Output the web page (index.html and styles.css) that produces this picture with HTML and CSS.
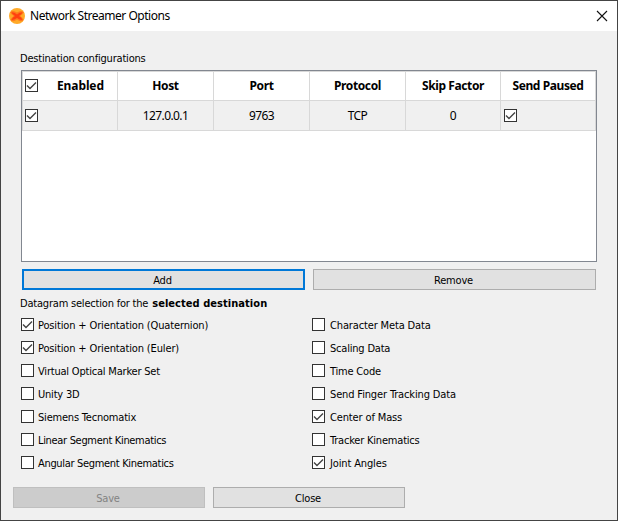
FILE: index.html
```html
<!DOCTYPE html>
<html lang="en">
<head>
<meta charset="utf-8">
<title>Network Streamer Options</title>
<link rel="stylesheet" href="styles.css">
</head>
<body>
<svg class="defs" width="0" height="0"><symbol id="tick" viewBox="0 0 11 11"><path d="M1 5.4 4 8.4 10 2.4" fill="none" stroke="#444" stroke-width="1.4"/></symbol></svg>
<div class="window">
  <header class="titlebar">
    <svg class="logo" viewBox="0 0 16 16"><circle cx="8" cy="8" r="8" fill="#ffaa28"/><path d="M1.2 4.2Q4 1.8 8 4.6 12 1.8 14.8 4.2 13.6 6.8 11.2 8 13.6 9.4 14.6 12 12 14.6 8 11.6 4 14.6 1.4 12 2.4 9.4 4.8 8 2.4 6.8 1.2 4.2Z" fill="#ff7a1c"/><path d="M2.4 4.3Q5.4 4.2 8 6.4 10.6 4.2 13.6 4.3 12.4 6.8 10 8.1 12.6 9.6 13.6 12 10.6 11.8 8 10 5.4 11.8 2.4 12 3.4 9.6 6 8.1 3.6 6.8 2.4 4.3Z" fill="#ff4010"/></svg>
    <h1>Network Streamer Options</h1>
    <svg class="close" viewBox="0 0 12 12"><path d="M1 1 11 11M11 1 1 11" stroke="#111" stroke-width="1.1"/></svg>
  </header>
  <main>
    <p class="caption">Destination configurations</p>
    <div class="table">
      <div class="row head">
        <div class="cell first"><i class="box"><svg><use href="#tick"/></svg></i><span>Enabled</span></div>
        <div class="cell">Host</div><div class="cell">Port</div><div class="cell">Protocol</div><div class="cell">Skip Factor</div><div class="cell">Send Paused</div>
      </div>
      <div class="row data">
        <div class="cell first"><i class="box"><svg><use href="#tick"/></svg></i></div>
        <div class="cell">127.0.0.1</div><div class="cell">9763</div><div class="cell">TCP</div><div class="cell">0</div>
        <div class="cell check"><i class="box"><svg><use href="#tick"/></svg></i></div>
      </div>
    </div>
    <div class="actions"><button class="focus">Add</button><button>Remove</button></div>
    <p class="caption second">Datagram selection for the <b>selected destination</b></p>
    <div class="options">
      <div class="column">
        <label class="wide"><i class="box"><svg><use href="#tick"/></svg></i><span>Position + Orientation (Quaternion)</span></label>
        <label class="wide"><i class="box"><svg><use href="#tick"/></svg></i><span>Position + Orientation (Euler)</span></label>
        <label><i class="box"></i><span>Virtual Optical Marker Set</span></label>
        <label><i class="box"></i><span>Unity 3D</span></label>
        <label><i class="box"></i><span>Siemens Tecnomatix</span></label>
        <label class="tight"><i class="box"></i><span>Linear Segment Kinematics</span></label>
        <label class="tight"><i class="box"></i><span>Angular Segment Kinematics</span></label>
      </div>
      <div class="column right">
        <label class="wide"><i class="box"></i><span>Character Meta Data</span></label>
        <label><i class="box"></i><span>Scaling Data</span></label>
        <label><i class="box"></i><span>Time Code</span></label>
        <label class="wide"><i class="box"></i><span>Send Finger Tracking Data</span></label>
        <label class="wide"><i class="box"><svg><use href="#tick"/></svg></i><span>Center of Mass</span></label>
        <label><i class="box"></i><span>Tracker Kinematics</span></label>
        <label class="wide"><i class="box"><svg><use href="#tick"/></svg></i><span>Joint Angles</span></label>
      </div>
    </div>
  </main>
  <footer><button disabled>Save</button><button>Close</button></footer>
</div>
</body>
</html>
```
FILE: styles.css
```css
* { box-sizing: border-box; }
body { margin: 0; color: #000; font: 11px/15px "DejaVu Sans Condensed", "DejaVu Sans", sans-serif; font-stretch: condensed; letter-spacing: -0.2px; }
.defs { display: block; }
.window { width: 618px; height: 521px; border: 1px solid #444; background: #f0f0f0; }
.titlebar { height: 30px; background: #fff; display: flex; align-items: center; padding: 0 9px 0 8px; }
.logo { width: 16px; height: 16px; }
h1 { flex: 1; margin: 0 0 0 5px; font: 12px/16px "Noto Sans", sans-serif; letter-spacing: -0.48px; }
.close { width: 12px; height: 12px; }
main { padding: 20px 20px 0; }
.caption { margin: 0 0 4px -1px; height: 15px; white-space: nowrap; }
.table { width: 576px; height: 192px; border: 1px solid #828790; background: #fff; font: 12px/16px "Noto Sans", sans-serif; letter-spacing: -0.6px; }
.row { display: grid; grid-template-columns: 95px 96px 96px 96px 95px 95px; height: 30px; width: 574px; border-left: 1px solid #d8d8d8; border-bottom: 1px solid #d8d8d8; }
.head { font-weight: 700; border-top: 1px solid #d8d8d8; letter-spacing: -0.4px; }
.data { background: #f0f0f0; }
.cell { display: flex; align-items: center; justify-content: center; border-right: 1px solid #d8d8d8; }
.first { justify-content: flex-start; padding-left: 2px; }
.check { justify-content: flex-start; padding-left: 3px; }
.first span { margin-left: 19px; letter-spacing: -0.1px; }
.head .box { margin-top: -1px; }
.box { display: block; flex: none; width: 13px; height: 13px; border: 1px solid #333; background: #fff; }
.box svg { display: block; width: 11px; height: 11px; }
.actions { display: flex; gap: 8px; margin: 7px 0 0 1px; }
button { width: 283px; height: 21px; padding: 2px 2px 0 0; border: 1px solid #adadad; background: #e1e1e1; color: #000; font: inherit; letter-spacing: inherit; }
.focus { border: 2px solid #0078d7; }
.second { margin: 6px 0 0 -1px; }
.second b { margin-left: 1px; letter-spacing: 0.05px; }
.options { display: grid; grid-template-columns: 291px 1fr; margin-top: 6px; }
label { display: flex; align-items: center; gap: 4px; height: 15px; margin-bottom: 8px; white-space: nowrap; }
label span { padding-top: 2px; }
.right label { gap: 5px; }
.wide { letter-spacing: -0.14px; }
.tight { letter-spacing: -0.32px; }
footer { display: flex; gap: 8px; padding: 9px 12px 0; }
footer button { width: 192px; }
button:disabled { border-color: #bfbfbf; background: #ccc; color: #838383; }
```
